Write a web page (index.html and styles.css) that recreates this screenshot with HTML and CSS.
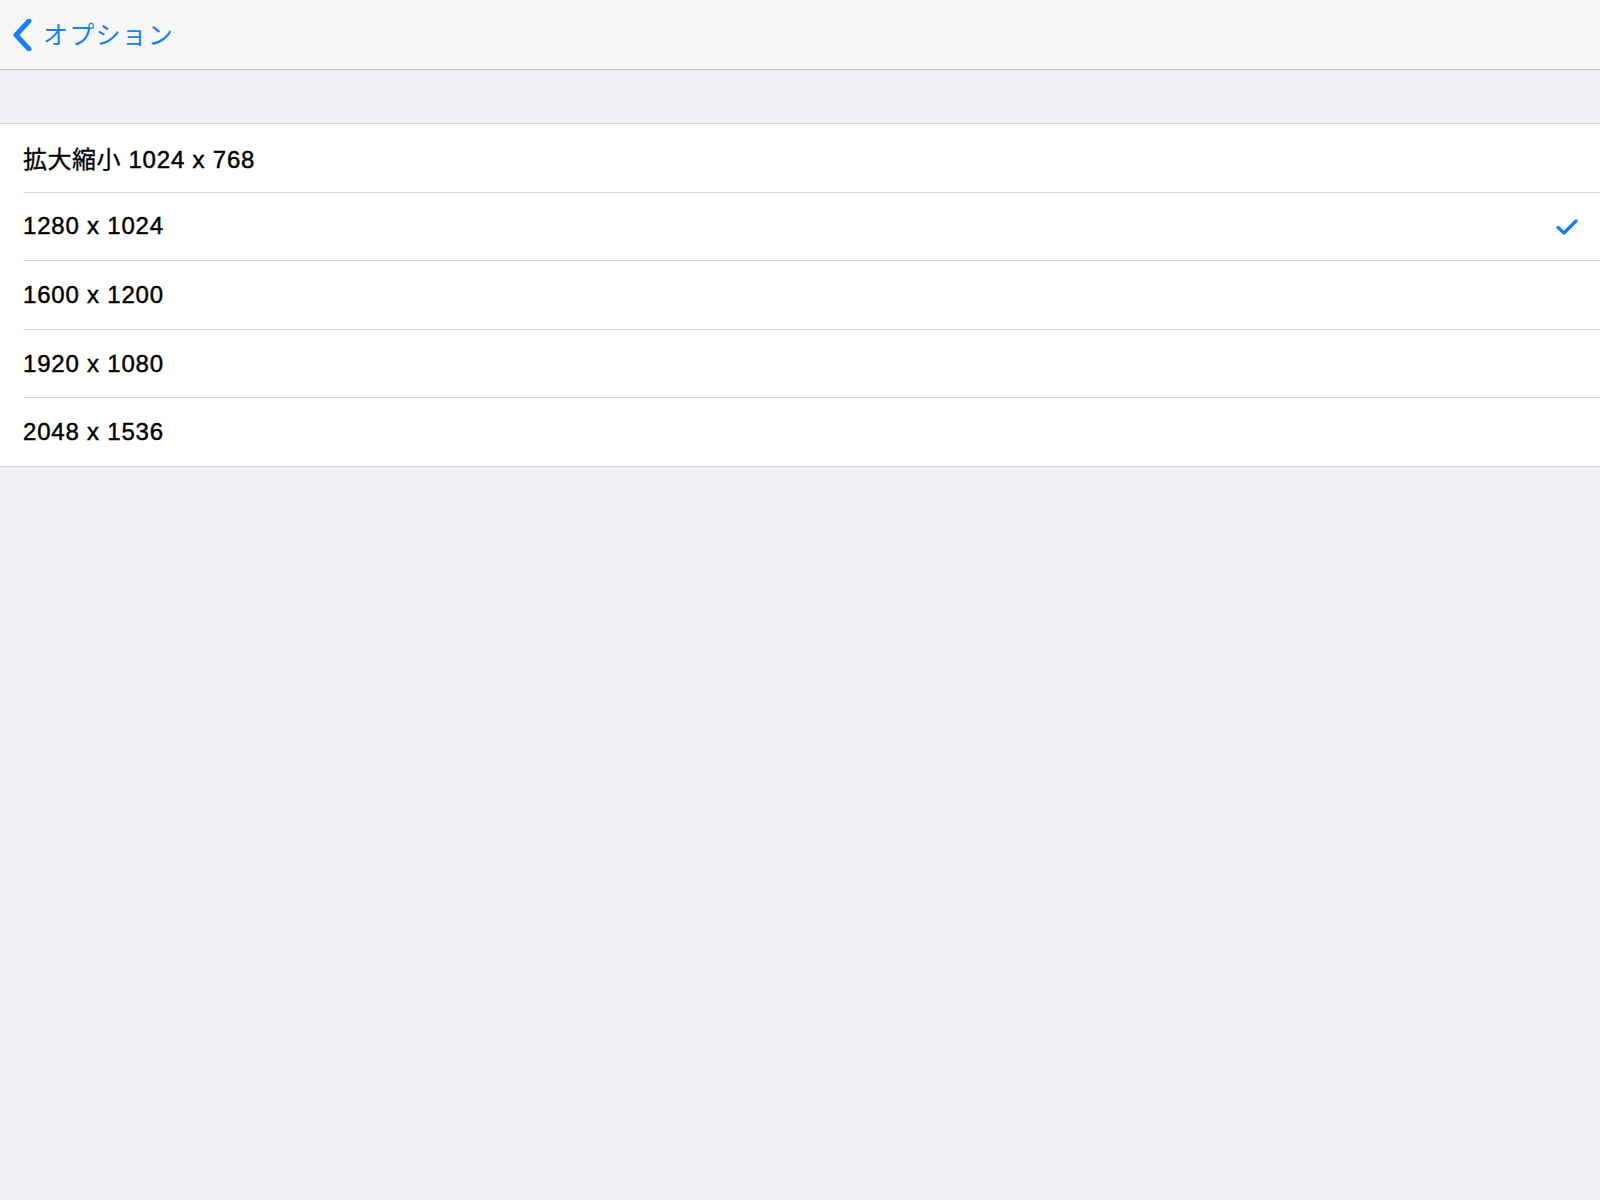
FILE: index.html
```html
<!DOCTYPE html>
<html lang="ja">
<head>
    <meta charset="UTF-8">
    <title>オプション</title>
    <link rel="stylesheet" href="styles.css">
</head>
<body>
    <header class="navbar">
        <a class="back" href="#">
            <svg class="chevron" width="20" height="32" viewBox="0 0 20 32">
                <path d="M17 2 L4 16 L17 30" fill="none" stroke="#147efb" stroke-width="5" stroke-linecap="round" stroke-linejoin="round"/>
            </svg>
            <span>オプション</span>
        </a>
    </header>

    <div class="section-gap"></div>

    <ul class="list">
        <li class="row"><span><span class="cjk">拡大縮小</span> 1024 x 768</span></li>
        <li class="row selected">
            <span>1280 x 1024</span>
            <svg class="check" width="22" height="18" viewBox="0 0 22 18">
                <path d="M2 9.5 L8 15 L20 3" fill="none" stroke="#147efb" stroke-width="3.2" stroke-linecap="round" stroke-linejoin="round"/>
            </svg>
        </li>
        <li class="row"><span>1600 x 1200</span></li>
        <li class="row"><span>1920 x 1080</span></li>
        <li class="row"><span>2048 x 1536</span></li>
    </ul>
</body>
</html>
```

FILE: styles.css
```css
body {
    margin: 0;
    padding: 0;
    min-height: 100vh;
    background: #efeff4;
    font-family: 'Liberation Sans', Arial, 'Noto Sans CJK JP', sans-serif;
}

.navbar {
    height: 70px;
    background: #f7f7f7;
    border-bottom: 1px solid #c6c6c9;
    display: flex;
    align-items: center;
    box-sizing: border-box;
}

.back {
    display: flex;
    align-items: center;
    gap: 11px;
    margin-left: 12px;
    color: #147efb;
    text-decoration: none;
    font-family: 'Noto Sans CJK JP', sans-serif;
    font-size: 25px;
    font-weight: 400;
    letter-spacing: 1.2px;
}

.back span {
    margin-top: -3px;
}

.section-gap {
    height: 53px;
    border-bottom: 1px solid #d6d6d9;
}

.list {
    list-style: none;
    margin: 0;
    padding: 0 0 0 23px;
    background: #ffffff;
    border-bottom: 1px solid #d6d6d9;
}

.row {
    height: 67.6px;
    display: flex;
    align-items: center;
    justify-content: space-between;
    padding-right: 22px;
    border-bottom: 1px solid #d9d9dc;
    font-size: 24px;
    letter-spacing: 0.8px;
    color: #000000;
    -webkit-text-stroke: 0.45px #000000;
}

.row .cjk {
    font-family: 'Noto Sans CJK JP', sans-serif;
    font-size: 24px;
    letter-spacing: 0.5px;
    -webkit-text-stroke: 0.3px #000000;
}

.row:last-child {
    border-bottom: none;
}

.check {
    display: block;
    margin-top: 2px;
}
```
